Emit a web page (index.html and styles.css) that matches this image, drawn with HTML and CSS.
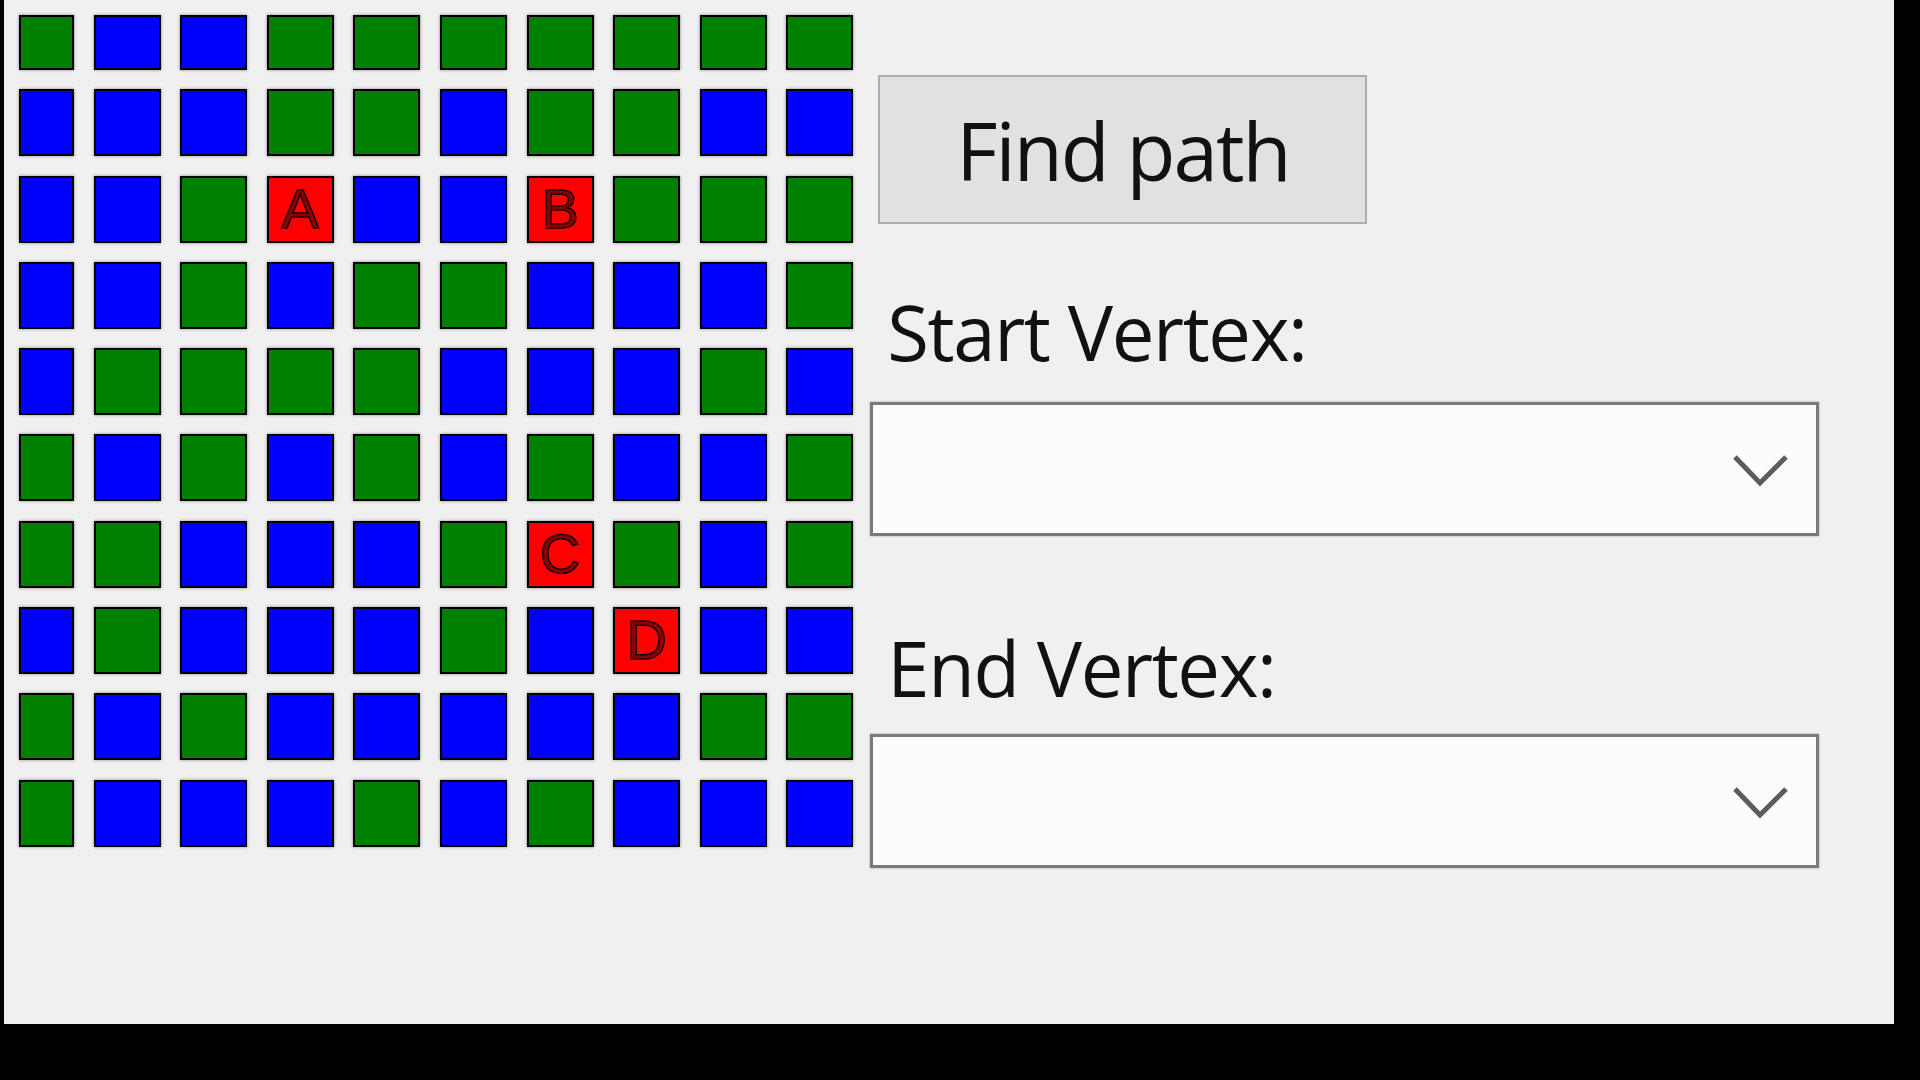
FILE: index.html
```html
<!DOCTYPE html>
<html>
<head>
<meta charset="utf-8">
<title>Find path</title>
<link rel="stylesheet" href="styles.css">
</head>
<body>
<div class="window">
  <div class="board">
    <div class="cell g"></div><div class="cell b"></div><div class="cell b"></div><div class="cell g"></div><div class="cell g"></div><div class="cell g"></div><div class="cell g"></div><div class="cell g"></div><div class="cell g"></div><div class="cell g"></div>
    <div class="cell b"></div><div class="cell b"></div><div class="cell b"></div><div class="cell g"></div><div class="cell g"></div><div class="cell b"></div><div class="cell g"></div><div class="cell g"></div><div class="cell b"></div><div class="cell b"></div>
    <div class="cell b"></div><div class="cell b"></div><div class="cell g"></div><div class="cell r">A</div><div class="cell b"></div><div class="cell b"></div><div class="cell r">B</div><div class="cell g"></div><div class="cell g"></div><div class="cell g"></div>
    <div class="cell b"></div><div class="cell b"></div><div class="cell g"></div><div class="cell b"></div><div class="cell g"></div><div class="cell g"></div><div class="cell b"></div><div class="cell b"></div><div class="cell b"></div><div class="cell g"></div>
    <div class="cell b"></div><div class="cell g"></div><div class="cell g"></div><div class="cell g"></div><div class="cell g"></div><div class="cell b"></div><div class="cell b"></div><div class="cell b"></div><div class="cell g"></div><div class="cell b"></div>
    <div class="cell g"></div><div class="cell b"></div><div class="cell g"></div><div class="cell b"></div><div class="cell g"></div><div class="cell b"></div><div class="cell g"></div><div class="cell b"></div><div class="cell b"></div><div class="cell g"></div>
    <div class="cell g"></div><div class="cell g"></div><div class="cell b"></div><div class="cell b"></div><div class="cell b"></div><div class="cell g"></div><div class="cell r">C</div><div class="cell g"></div><div class="cell b"></div><div class="cell g"></div>
    <div class="cell b"></div><div class="cell g"></div><div class="cell b"></div><div class="cell b"></div><div class="cell b"></div><div class="cell g"></div><div class="cell b"></div><div class="cell r">D</div><div class="cell b"></div><div class="cell b"></div>
    <div class="cell g"></div><div class="cell b"></div><div class="cell g"></div><div class="cell b"></div><div class="cell b"></div><div class="cell b"></div><div class="cell b"></div><div class="cell b"></div><div class="cell g"></div><div class="cell g"></div>
    <div class="cell g"></div><div class="cell b"></div><div class="cell b"></div><div class="cell b"></div><div class="cell g"></div><div class="cell b"></div><div class="cell g"></div><div class="cell b"></div><div class="cell b"></div><div class="cell b"></div>
  </div>
  <div class="panel">
    <button class="btn">Find path</button>
    <div class="lbl lbl-start">Start Vertex:</div>
    <div class="combo">
      <svg class="chev" width="60" height="36" viewBox="0 0 60 36"><polyline points="4,6 29,32 55,6" fill="none" stroke="#5c5c5c" stroke-width="5"/></svg>
    </div>
    <div class="lbl lbl-end">End Vertex:</div>
    <div class="combo">
      <svg class="chev" width="60" height="36" viewBox="0 0 60 36"><polyline points="4,6 29,32 55,6" fill="none" stroke="#5c5c5c" stroke-width="5"/></svg>
    </div>
  </div>
</div>
</body>
</html>
```

FILE: styles.css
```css
html, body {
  margin: 0;
  padding: 0;
  background: #000;
}

.window {
  margin-left: 4px;
  width: 1890px;
  height: 1024px;
  background: #f0f0f0;
  box-sizing: border-box;
  padding: 15px 0 0 15px;
  display: flex;
  align-items: flex-start;
}

.board {
  display: grid;
  grid-template-columns: 55px repeat(9, 67px);
  grid-template-rows: 55px repeat(9, 67px);
  column-gap: 19.6px;
  row-gap: 19.3px;
}

.cell {
  box-sizing: border-box;
  border: 2px solid #000;
  box-shadow: 0 0 3px rgba(0, 0, 0, 0.45);
  font-family: "Liberation Sans", Arial, sans-serif;
  font-size: 56px;
  line-height: 62px;
  text-align: center;
  color: #8a0000;
  -webkit-text-stroke: 1.5px #1a0000;
}

.g { background: #008000; }
.b { background: #0000ff; }
.r { background: #ff0000; }

.panel {
  margin-left: 17px;
  display: flex;
  flex-direction: column;
  align-items: flex-start;
}

.btn {
  margin: 60px 0 0 8px;
  width: 489px;
  height: 149px;
  box-sizing: border-box;
  border: 2px solid #adadad;
  background: #e1e1e1;
  padding: 0;
  font-family: "Open Sans", "Noto Sans", sans-serif;
  font-size: 80px;
  letter-spacing: -2px;
  color: #111;
  line-height: 1;
}

.lbl {
  font-family: "Open Sans", "Noto Sans", sans-serif;
  font-size: 76px;
  line-height: 76px;
  letter-spacing: -1.4px;
  color: #111;
  margin-left: 17px;
}

.lbl-start { margin-top: 70px; }
.lbl-end { margin-top: 94px; }

.combo {
  box-sizing: border-box;
  width: 949px;
  height: 134px;
  margin-top: 32px;
  border: 3px solid #7a7a7a;
  box-shadow: 0 0 2px rgba(0, 0, 0, 0.35);
  background: #fcfcfb;
  display: flex;
  align-items: center;
  justify-content: flex-end;
  padding-right: 25px;
}

.lbl-end + .combo { margin-top: 28px; }

.chev { display: block; }
```
